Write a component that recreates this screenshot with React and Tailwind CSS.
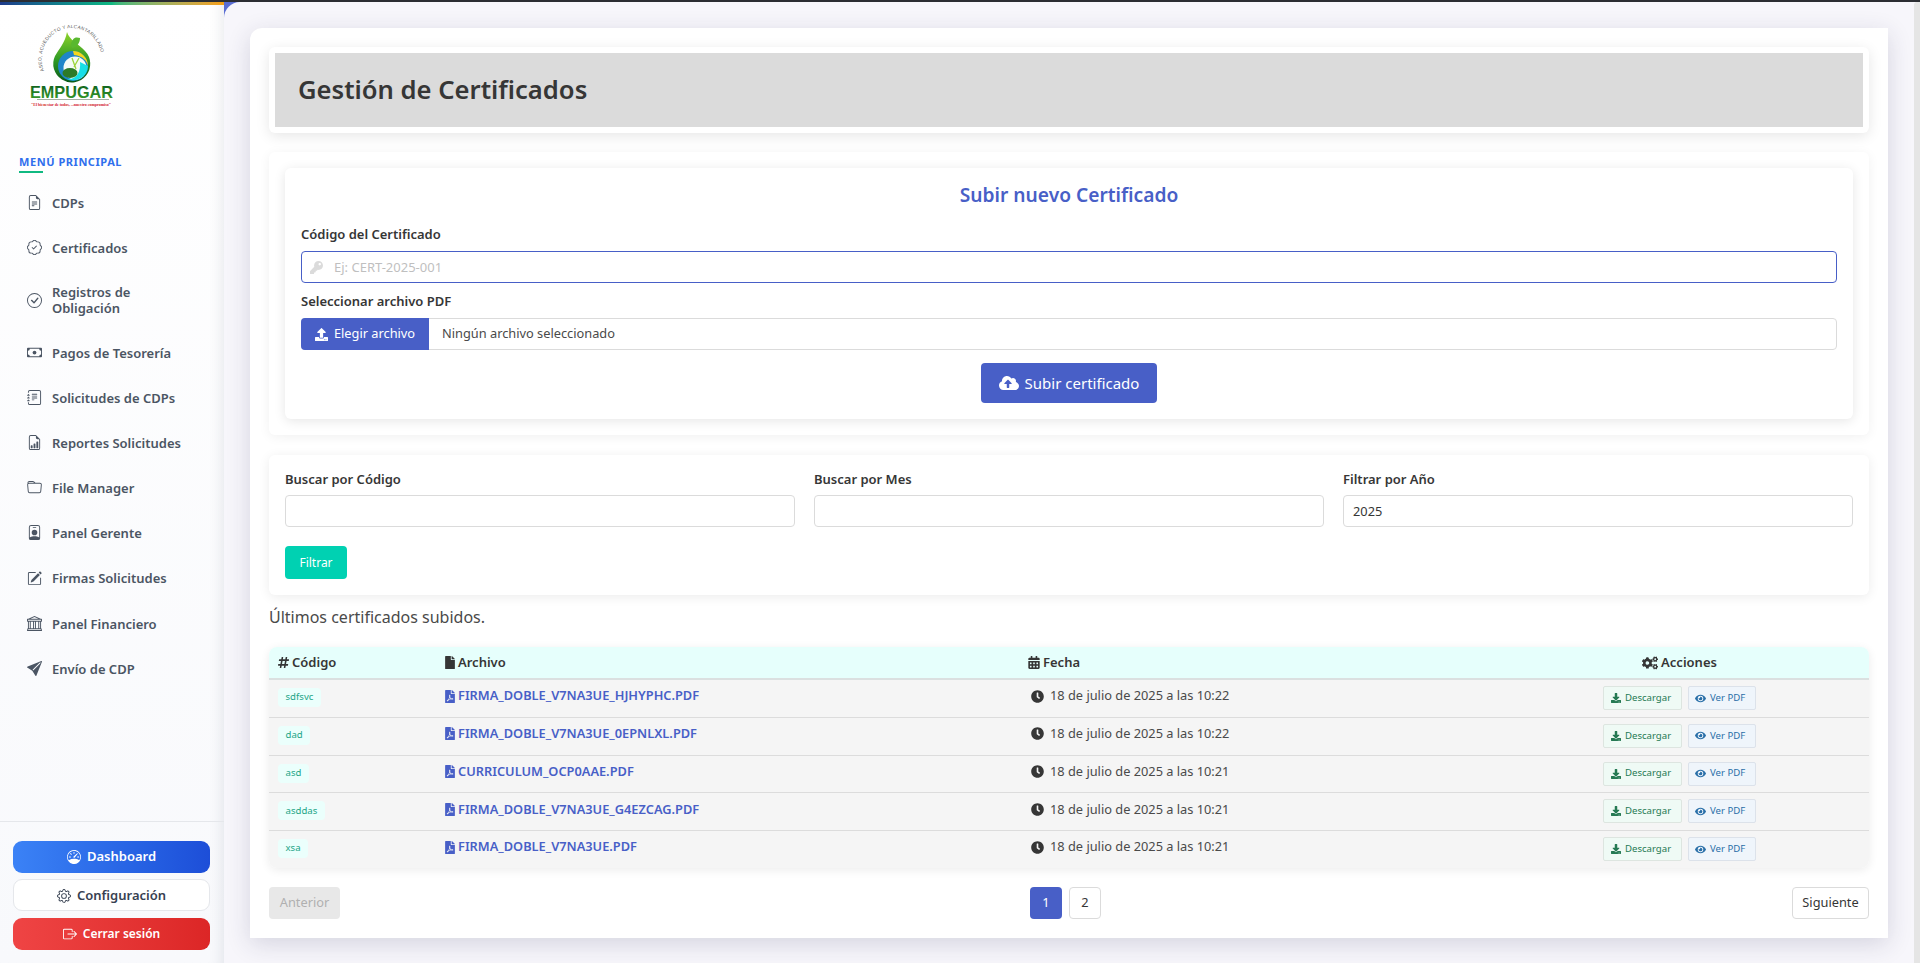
import React from "react";
import {
  BsFileEarmarkText, BsPatchCheck, BsCheckCircle, BsCash, BsJournalText, BsFileEarmarkBarGraph,
  BsFolder, BsPersonBadge, BsPencilSquare, BsBank, BsSendFill, BsSpeedometer, BsGear, BsBoxArrowRight,
} from "react-icons/bs";
import {
  FaKey, FaUpload, FaCloudUploadAlt, FaHashtag, FaFile, FaCalendarAlt, FaCogs, FaFilePdf, FaClock, FaDownload, FaEye,
} from "react-icons/fa";

const nav = [
  [BsFileEarmarkText, "CDPs", "h-[45px]"],
  [BsPatchCheck, "Certificados", "h-[45px]"],
  [BsCheckCircle, "Registros de Obligación", "h-[60px]"],
  [BsCash, "Pagos de Tesorería", "h-[45px]"],
  [BsJournalText, "Solicitudes de CDPs", "h-[45px]"],
  [BsFileEarmarkBarGraph, "Reportes Solicitudes", "h-[45px]"],
  [BsFolder, "File Manager", "h-[45px]"],
  [BsPersonBadge, "Panel Gerente", "h-[45px]"],
  [BsPencilSquare, "Firmas Solicitudes", "h-[46px]"],
  [BsBank, "Panel Financiero", "h-[45px]"],
  [BsSendFill, "Envío de CDP", "h-[45px]"],
];

const rows = [
  ["sdfsvc", "FIRMA_DOBLE_V7NA3UE_HJHYPHC.PDF", "18 de julio de 2025 a las 10:22", "h-[37.75px]"],
  ["dad", "FIRMA_DOBLE_V7NA3UE_0EPNLXL.PDF", "18 de julio de 2025 a las 10:22", "h-[37.75px]"],
  ["asd", "CURRICULUM_OCP0AAE.PDF", "18 de julio de 2025 a las 10:21", "h-[37.75px]"],
  ["asddas", "FIRMA_DOBLE_V7NA3UE_G4EZCAG.PDF", "18 de julio de 2025 a las 10:21", "h-[37.75px]"],
  ["xsa", "FIRMA_DOBLE_V7NA3UE.PDF", "18 de julio de 2025 a las 10:21", "h-[36.5px]"],
];

function Logo() {
  return (
    <svg width="100" height="92" viewBox="0 0 100 92" className="block">
      <defs>
        <path id="arcLogo" d="M17 46 A30 31 0 1 1 73 44" fill="none" />
        <linearGradient id="lg" x1="0" x2="0" y1="0" y2="1">
          <stop offset="0" stopColor="#8fd42a" />
          <stop offset="0.55" stopColor="#2f9a25" />
          <stop offset="1" stopColor="#07591a" />
        </linearGradient>
        <linearGradient id="lt" x1="0" x2="0" y1="0" y2="1">
          <stop offset="0" stopColor="#0a5a1c" />
          <stop offset="1" stopColor="#3fa52c" />
        </linearGradient>
      </defs>
      <text fontSize="4.7" letterSpacing="0.3" fill="#555" fontFamily="'Liberation Sans', sans-serif">
        <textPath href="#arcLogo">ASEO, ACUEDUCTO Y ALCANTARILLADO</textPath>
      </text>
      <path d="M40 7 C42 15 52 19 58 26 A18.5 18.5 0 1 1 28 31 C32 24 38 18 40 7Z" fill="url(#lg)" />
      <path d="M44 19 C46 12 49 12 53 13 C53 18 50 22 45 23Z" fill="#59b82f" />
      <circle cx="46" cy="41" r="15" fill="#1f86c9" />
      <circle cx="48" cy="43" r="11.5" fill="#f4fbf6" />
      <path d="M46 26 A15 15 0 0 1 61 41 C60 36 56 31 47 30Z" fill="#f6d61c" />
      <path d="M61 41 A15 15 0 0 1 40 54 C50 55 54 46 53 37Z" fill="#17dfe6" />
      <ellipse cx="43" cy="48" rx="7.5" ry="5" fill="#2d7a28" />
      <path d="M45 33 L49 44 M52 33 L47 42" stroke="#9bd53a" strokeWidth="1.3" fill="none" />
      <text x="3" y="73" fontSize="17" fontWeight="700" fill="url(#lt)" textLength="83" lengthAdjust="spacingAndGlyphs" fontFamily="'Liberation Sans', sans-serif">EMPUGAR</text>
      <rect x="10" y="74" width="72" height="1" fill="#a3b0a3" />
      <text x="4" y="80.5" fontSize="4.2" fontWeight="700" fill="#d3232a" textLength="80" lengthAdjust="spacingAndGlyphs" fontFamily="'Liberation Serif', serif">"El bienestar de todos, ...nuestro compromiso"</text>
    </svg>
  );
}

function Sidebar() {
  return (
    <aside className="relative flex h-[961px] w-[224px] shrink-0 flex-col bg-gradient-to-b from-white to-[#f8f9fc] shadow-[inset_-14px_0_14px_-12px_rgba(30,40,70,0.10)]">
      <div className="h-[3px] bg-gradient-to-r from-[#1e3a8a] via-[#10b981] to-[#f59e0b]" />
      <div className="h-[110px] pl-[27px] pt-[20px]"><Logo /></div>
      <div className="ml-[19px] mt-[39px] text-[11px] font-bold leading-[15px] tracking-[0.55px] text-[#2f6fed]">MENÚ PRINCIPAL</div>
      <div className="ml-[19px] mt-[2px] h-[2px] w-[24px] bg-[#10b981]" />
      <nav className="mt-[7px] flex flex-col">
        {nav.map(([I, t, h]) => (
          <div key={t} className={`flex ${h} items-center pl-[27px] pr-[30px] text-[13px] font-semibold leading-[16px] text-[#4b5563]`}>
            <span className="flex w-[25px] shrink-0"><I className="text-[15px] text-[#4b5563]" /></span>
            <span>{t}</span>
          </div>
        ))}
      </nav>
      <div className="mt-auto border-t border-[#e5e7eb] pb-[13px] pl-[13px] pr-[14px] pt-[19px]">
        <div className="flex h-[32px] items-center justify-center gap-[6px] rounded-[9px] bg-gradient-to-r from-[#3b82f6] to-[#1d4ed8] text-[13px] font-semibold text-white">
          <BsSpeedometer className="text-[14px]" /> Dashboard
        </div>
        <div className="mt-[6px] flex h-[32px] items-center justify-center gap-[6px] rounded-[9px] border border-[#e5e7eb] bg-white pt-[1px] text-[13px] font-semibold text-[#374151]">
          <BsGear className="text-[14px]" /> Configuración
        </div>
        <div className="mt-[7px] flex h-[32px] items-center justify-center gap-[6px] rounded-[9px] bg-gradient-to-r from-[#ef4444] to-[#dc2626] text-[12px] font-semibold text-white">
          <BsBoxArrowRight className="text-[14px]" /> Cerrar sesión
        </div>
      </div>
    </aside>
  );
}

function Label({ children, className = "" }) {
  return <div className={`text-[13px] font-semibold leading-[18px] text-[#363636] ${className}`}>{children}</div>;
}

function FilterField({ label, value }) {
  return (
    <div className="flex-1">
      <Label>{label}</Label>
      <div className="mt-[7px] flex h-[32px] items-center rounded-[4px] border border-[#dbdbdb] bg-white px-[9px] pt-[1px] text-[12.8px] text-[#363636]">{value}</div>
    </div>
  );
}

function Table() {
  const cols = "grid grid-cols-[167px_583px_482px_368px]";
  return (
    <div className="overflow-hidden rounded-[8px] shadow-[0_2px_10px_rgba(0,0,0,0.08)]">
      <div className={`${cols} h-[33px] items-center border-b-2 border-[#dbe0e0] bg-[#e6fffc] text-[13px] font-semibold text-[#363636]`}>
        <div className="flex items-center gap-[3px] pl-[9px]"><FaHashtag className="h-[13px] w-[11px]" /> Código</div>
        <div className="flex items-center gap-[3px] pl-[9px]"><FaFile className="h-[13px] w-[10px]" /> Archivo</div>
        <div className="flex items-center gap-[3px] pl-[9px]"><FaCalendarAlt className="h-[13px] w-[12px]" /> Fecha</div>
        <div className="flex items-center justify-center gap-[3px] pr-[11px]"><FaCogs className="text-[16px]" /> Acciones</div>
      </div>
      {rows.map(([code, file, date, h], i) => (
        <div key={code} className={`${cols} ${h} bg-[#f5f5f5] ${i < 4 ? "border-b-[1.5px] border-[#dcdcdc]" : ""}`}>
          <div className="flex items-start pl-[9px] pt-[8px]">
            <span className="flex h-[19px] items-center rounded-[4px] bg-[#ebfffc] px-[7.5px] text-[9.6px] text-[#1ba587]">{code}</span>
          </div>
          <div className="flex h-[32px] items-center gap-[3px] pl-[9px] text-[12.8px] font-semibold text-[#485fc7]">
            <FaFilePdf className="h-[13px] w-[10px]" /> {file}
          </div>
          <div className="flex h-[32px] items-center gap-[6px] pl-[12px] text-[12.8px] text-[#4a4a4a]">
            <FaClock className="text-[13px] text-[#363636]" /> {date}
          </div>
          <div className="flex h-[36px] items-center justify-center gap-[6px] pr-[11px]">
            <span className="flex h-[24px] w-[79px] items-center gap-[4px] rounded-[2px] border border-[#dde5e0] bg-[#effaf5] pl-[7px] text-[9.6px] text-[#257953]">
              <FaDownload className="text-[10px]" /> Descargar
            </span>
            <span className="flex h-[24px] w-[68px] items-center gap-[4px] rounded-[2px] border border-[#dce2ea] bg-[#eff5fb] pl-[6px] text-[9.6px] text-[#296fa8]">
              <FaEye className="text-[11px]" /> Ver PDF
            </span>
          </div>
        </div>
      ))}
    </div>
  );
}

export default function App() {
  return (
    <div className="h-[963px] w-[1920px] overflow-hidden bg-white font-['Noto_Sans',sans-serif]">
      <div className="h-[2px] bg-[#2b2d33]" />
      <div className="flex">
        <Sidebar />
        <div className="h-[961px] flex-1 bg-[#5a6dd2]">
          <div className="flex h-full rounded-tl-[16px] bg-[#f7f6fb]">
            <main className="ml-[26px] mt-[26px] h-[910px] w-[1638px] rounded-tl-[12px] bg-white px-[19px] pt-[19px] shadow-[0_6px_24px_rgba(40,40,80,0.16)]">
              <div className="h-[86px] rounded-[6px] bg-white p-[6px] shadow-[0_3px_14px_rgba(0,0,0,0.10)]">
                <div className="flex h-[74px] items-center bg-[#dbdbdb] pl-[23px] text-[25.6px] font-semibold text-[#363636]">Gestión de Certificados</div>
              </div>
              <div className="mt-[19px] h-[283px] rounded-[6px] bg-white p-[16px] shadow-[0_2px_12px_rgba(0,0,0,0.06)]">
                <div className="h-[251px] rounded-[6px] bg-white px-[16px] shadow-[0_2px_12px_rgba(0,0,0,0.10)]">
                  <div className="pt-[14px] text-center text-[19.2px] font-semibold leading-[26px] text-[#485fc7]">Subir nuevo Certificado</div>
                  <Label className="mt-[17px]">Código del Certificado</Label>
                  <div className="mt-[8px] flex h-[32px] items-center rounded-[4px] border border-[#485fc7] bg-white pl-[8px] pt-[1px] text-[13px] text-[#bfbfbf]">
                    <FaKey className="text-[13px] text-[#dbdbdb]" />
                    <span className="ml-[11px]">Ej: CERT-2025-001</span>
                  </div>
                  <Label className="mt-[9px]">Seleccionar archivo PDF</Label>
                  <div className="mt-[8px] flex h-[32px] items-stretch rounded-[4px] border border-[#dbdbdb] bg-white text-[12.8px] text-[#4a4a4a]">
                    <div className="-my-px -ml-px flex w-[128px] items-center justify-center gap-[6px] rounded-l-[4px] bg-[#485fc7] text-white">
                      <FaUpload className="text-[13px]" /> Elegir archivo
                    </div>
                    <div className="flex items-center pl-[13px]">Ningún archivo seleccionado</div>
                  </div>
                  <div className="mt-[13px] flex justify-center">
                    <div className="flex h-[40px] w-[176px] items-center justify-center gap-[6px] rounded-[4px] bg-[#485fc7] text-[15px] text-white">
                      <FaCloudUploadAlt className="text-[20px]" /> Subir certificado
                    </div>
                  </div>
                </div>
              </div>
              <div className="mt-[20px] h-[140px] rounded-[6px] bg-white px-[16px] pt-[15px] shadow-[0_2px_12px_rgba(0,0,0,0.08)]">
                <div className="flex gap-[19px]">
                  <FilterField label="Buscar por Código" value="" />
                  <FilterField label="Buscar por Mes" value="" />
                  <FilterField label="Filtrar por Año" value="2025" />
                </div>
                <div className="mt-[19px] flex h-[33px] w-[62px] items-center justify-center rounded-[4px] bg-[#00d1b2] text-[12px] text-white">Filtrar</div>
              </div>
              <div className="mt-[10px] h-[42px] text-[16px] leading-[24px] text-[#4a4a4a]">Últimos certificados subidos.</div>
              <Table />
              <div className="mt-[19.5px] flex items-center justify-between text-[12.8px]">
                <div className="flex h-[32px] w-[71px] items-center justify-center rounded-[4px] bg-[#e8e8e8] text-[#b0b0b0]">Anterior</div>
                <div className="flex gap-[7px] pr-[1px]">
                  <div className="flex h-[32px] w-[32px] items-center justify-center rounded-[4px] bg-[#485fc7] text-white">1</div>
                  <div className="flex h-[32px] w-[32px] items-center justify-center rounded-[4px] border border-[#dbdbdb] bg-white text-[#363636]">2</div>
                </div>
                <div className="flex h-[32px] w-[77px] items-center justify-center rounded-[4px] border border-[#dbdbdb] bg-white text-[#363636]">Siguiente</div>
              </div>
            </main>
            <div className="ml-auto h-full w-[6px] rounded-tl-[3px] bg-[#e5e5e5]" />
          </div>
        </div>
      </div>
    </div>
  );
}
